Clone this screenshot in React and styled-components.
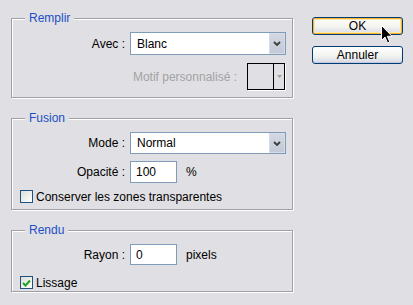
import React from 'react'
import styled, { createGlobalStyle } from 'styled-components'

const Global = createGlobalStyle`
  html, body {
    margin: 0;
    padding: 0;
    background: #e0dfe3;
    width: 413px;
    height: 305px;
    overflow: hidden;
    font-family: "Liberation Sans", Arial, sans-serif;
    font-size: 12px;
    color: #000;
  }
`

const Dialog = styled.div`
  position: relative;
  display: flex;
  width: 413px;
  height: 305px;
`

const Panels = styled.div`
  display: flex;
  flex-direction: column;
  gap: ${(p) => p.gap || 20}px;
  padding: 18px 0 0 11px;
`

const Group = styled.div`
  position: relative;
  box-sizing: border-box;
  width: 282px;
  height: ${(p) => p.h}px;
  margin-bottom: ${(p) => p.mb || 0}px;
  border: 1px solid #a0a0a4;
  box-shadow: inset 1px 1px 0 #fff, 1px 1px 0 #fff;
  display: flex;
  flex-direction: column;
  padding-top: 13px;
`

const Legend = styled.span`
  position: absolute;
  top: -8px;
  left: 13px;
  padding: 0 4px;
  background: #e0dfe3;
  color: #2150c6;
  line-height: 15px;
`

const FieldRow = styled.div`
  display: grid;
  grid-template-columns: 113px auto auto;
  justify-content: start;
  align-items: center;
  column-gap: 5px;
  margin-top: ${(p) => p.mt || 0}px;
`

const Label = styled.span`
  text-align: right;
  white-space: nowrap;
`

const Unit = styled.span`
  margin-left: 4px;
`

const SelectBox = styled.div`
  box-sizing: border-box;
  width: 156px;
  height: ${(p) => p.h || 23}px;
  border: 1px solid #7f9db9;
  background: #fff;
  display: flex;
  align-items: stretch;
`

const SelectText = styled.span`
  flex: 1;
  padding-left: 6px;
  display: flex;
  align-items: center;
`

const DropButton = styled.span`
  box-sizing: border-box;
  width: 16px;
  border: 1px solid #d5dbe8;
  background: linear-gradient(#d3d8e3, #c3c9d6);
  display: flex;
  align-items: center;
  justify-content: center;
`

const TextInput = styled.div`
  box-sizing: border-box;
  width: 47px;
  height: ${(p) => p.h || 22}px;
  border: 1px solid #7f9db9;
  background: #fff;
  padding-left: 5px;
  display: flex;
  align-items: center;
`

const PatternRow = styled.div`
  display: flex;
  justify-content: flex-end;
  align-items: center;
  gap: 10px;
  padding-right: 7px;
  margin-top: 8px;
`

const Disabled = styled.span`
  color: #a3a3a3;
`

const Swatch = styled.div`
  box-sizing: border-box;
  width: 38px;
  height: 27px;
  border: 1px solid #000;
  box-shadow: 1px 1px 0 #fff;
  display: grid;
  grid-template-columns: 25px 1px 1fr;
`

const SwatchDivider = styled.span`
  background: #000;
`

const SwatchArrow = styled.span`
  display: flex;
  align-items: center;
  justify-content: center;
`

const CheckRow = styled.label`
  display: flex;
  align-items: center;
  gap: 3px;
  padding-left: 8px;
  margin-top: ${(p) => p.mt || 0}px;
  height: 13px;
`

const Box = styled.span`
  box-sizing: border-box;
  width: 13px;
  height: 13px;
  border: 1px solid #1c5180;
  background: linear-gradient(135deg, #dcdcd7, #fff);
  display: flex;
  align-items: center;
  justify-content: center;
`

const Buttons = styled.div`
  display: flex;
  flex-direction: column;
  gap: 11px;
  padding: 17px 0 0 19px;
`

const Button = styled.button`
  box-sizing: border-box;
  width: 91px;
  height: 18px;
  padding: 0;
  border: 1px solid #003c74;
  border-radius: 3px;
  font-family: inherit;
  font-size: 12px;
  color: #000;
  background: linear-gradient(#fff 0%, #f3f3ef 55%, #d6d9e6 100%);
  box-shadow: ${(p) => (p.primary
    ? 'inset 0 0 0 1px #f8b330, inset 0 0 0 2px #fde7a8'
    : 'inset 0 -1px 0 #c4cbe0')};
`

const Cursor = styled.svg`
  position: absolute;
  left: 381px;
  top: 25px;
`

const Chevron = () => (
  <svg width="8" height="5" viewBox="0 0 8 5">
    <path d="M1 1 L4 4 L7 1" fill="none" stroke="#3b3b3b" strokeWidth="1.8" />
  </svg>
)

const Select = ({ value, h }) => (
  <SelectBox h={h}>
    <SelectText>{value}</SelectText>
    <DropButton><Chevron /></DropButton>
  </SelectBox>
)

const Checkbox = ({ checked, children, mt }) => (
  <CheckRow mt={mt}>
    <Box>
      {checked && (
        <svg width="9" height="8" viewBox="0 0 9 8">
          <path d="M1 4 L3.5 6.5 L8 1.5" fill="none" stroke="#21a121" strokeWidth="2" />
        </svg>
      )}
    </Box>
    <span>{children}</span>
  </CheckRow>
)

const App = () => (
  <Dialog>
    <Global />
    <Panels>
      <Group h={80}>
        <Legend>Remplir</Legend>
        <FieldRow>
          <Label>Avec :</Label>
          <Select value="Blanc" />
        </FieldRow>
        <PatternRow>
          <Disabled>Motif personnalisé :</Disabled>
          <Swatch>
            <span />
            <SwatchDivider />
            <SwatchArrow>
              <svg width="5" height="3" viewBox="0 0 5 3">
                <path d="M0 0 H5 L2.5 3 Z" fill="#a0a0a0" />
              </svg>
            </SwatchArrow>
          </Swatch>
        </PatternRow>
      </Group>
      <Group h={92}>
        <Legend>Fusion</Legend>
        <FieldRow>
          <Label>Mode :</Label>
          <Select value="Normal" h={22} />
        </FieldRow>
        <FieldRow mt={7}>
          <Label>Opacité :</Label>
          <TextInput>100</TextInput>
          <Unit>%</Unit>
        </FieldRow>
        <Checkbox mt={7}>Conserver les zones transparentes</Checkbox>
      </Group>
      <Group h={62}>
        <Legend>Rendu</Legend>
        <FieldRow>
          <Label>Rayon :</Label>
          <TextInput h={21}>0</TextInput>
          <Unit>pixels</Unit>
        </FieldRow>
        <Checkbox checked mt={11}>Lissage</Checkbox>
      </Group>
    </Panels>
    <Buttons>
      <Button primary>OK</Button>
      <Button>Annuler</Button>
    </Buttons>
    <Cursor width="13" height="20" viewBox="0 0 13 20">
      <path d="M0.5 0.5 L0.5 15.5 L4 12 L6.5 18 L8.8 17 L6.3 11.3 L11 11.3 Z" fill="#000" stroke="#fff" strokeWidth="1" />
    </Cursor>
  </Dialog>
)

export default App
